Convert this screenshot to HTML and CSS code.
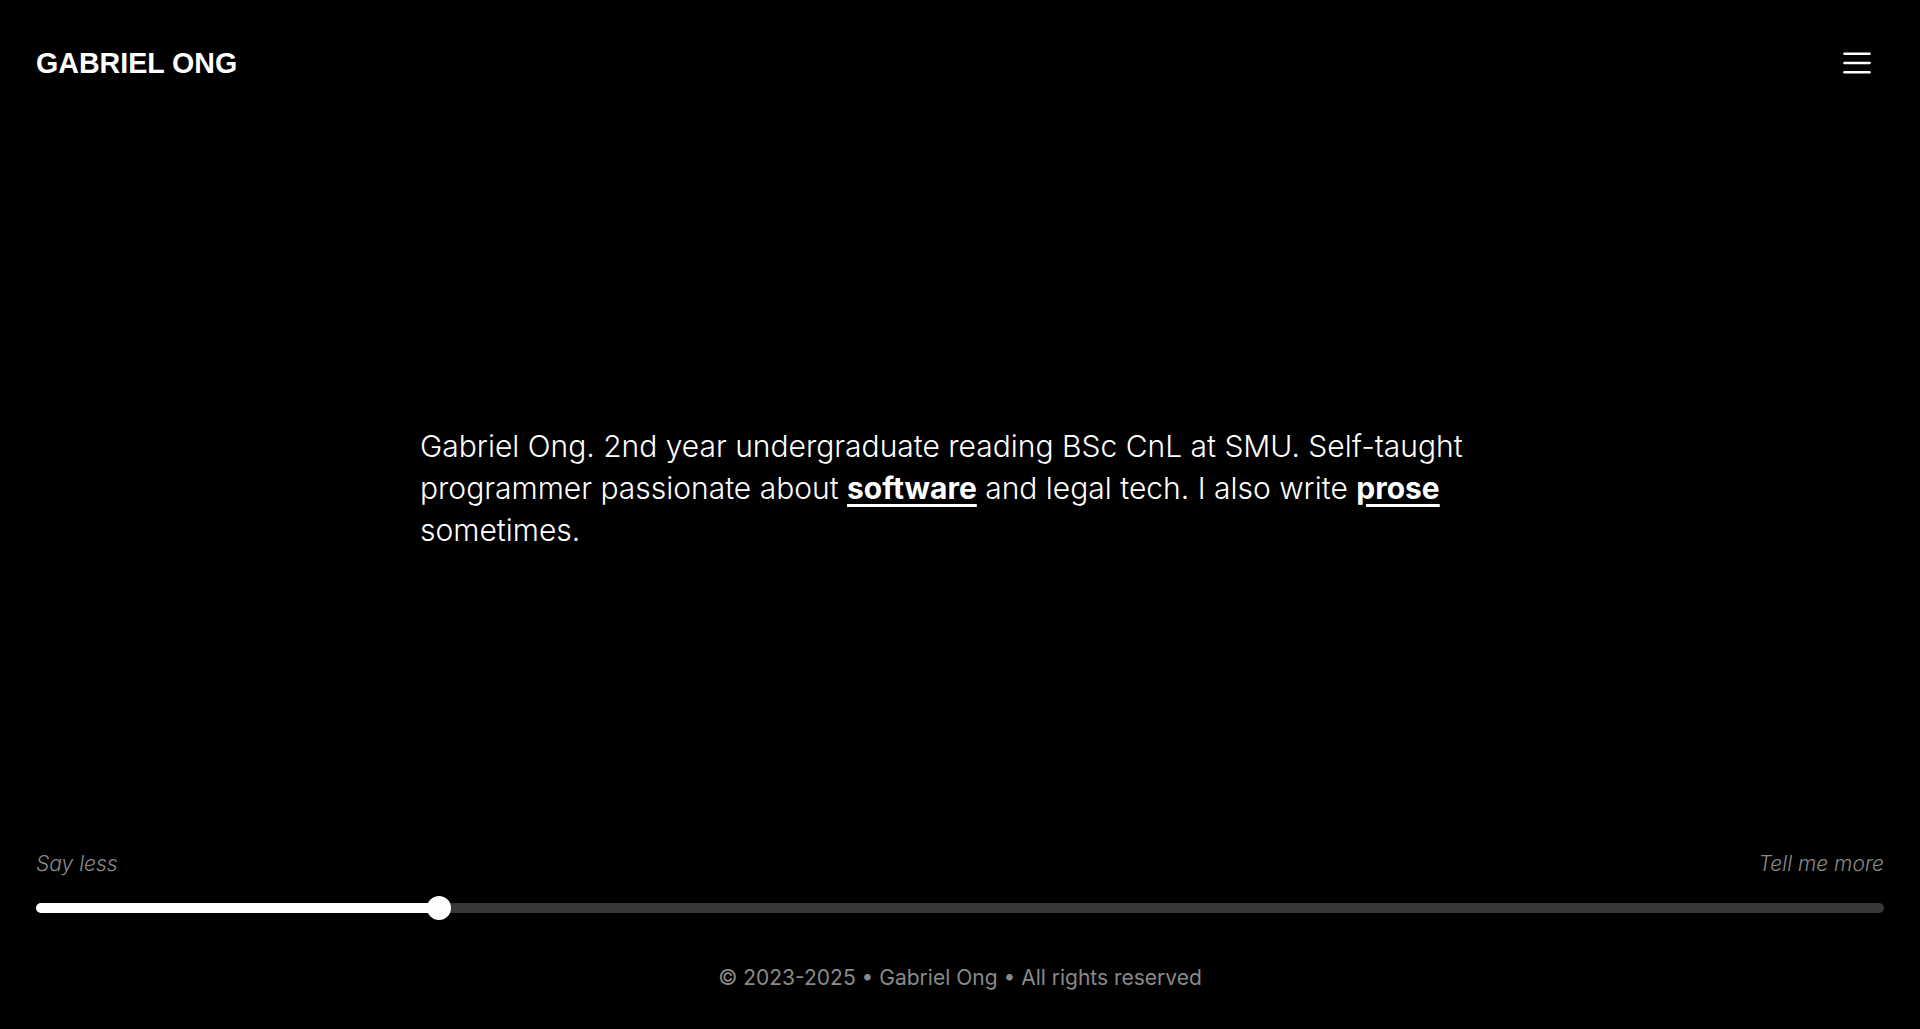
FILE: index.html
```html
<!DOCTYPE html>
<html lang="en">
<head>
<meta charset="utf-8">
<title>Gabriel Ong</title>
<link rel="stylesheet" href="styles.css">
</head>
<body>
<div class="page">
  <header class="header">
    <a class="brand" href="#">GABRIEL ONG</a>
    <button class="menu-btn" aria-label="Menu">
      <svg width="28" height="24" viewBox="0 0 28 24" fill="none" stroke="#fff" stroke-width="2.6" stroke-linecap="round">
        <line x1="1.5" y1="2.8" x2="26.5" y2="2.8"/>
        <line x1="1.5" y1="12" x2="26.5" y2="12"/>
        <line x1="1.5" y1="21.2" x2="26.5" y2="21.2"/>
      </svg>
    </button>
  </header>
  <main class="main">
    <p class="bio">Gabriel Ong. 2nd year undergraduate reading BSc CnL at SMU. Self-taught programmer passionate about <a href="#">software</a> and legal tech. I also write <a href="#">prose</a> sometimes.</p>
  </main>
  <section class="controls">
    <div class="labels">
      <span>Say less</span>
      <span>Tell me more</span>
    </div>
    <div class="track">
      <div class="fill" style="width: 21.8%"></div>
      <div class="thumb" style="left: 21.8%"></div>
    </div>
  </section>
  <footer class="footer">© 2023-2025 • Gabriel Ong • All rights reserved</footer>
</div>
</body>
</html>
```

FILE: styles.css
```css
* { box-sizing: border-box; }
html, body {
  margin: 0;
  padding: 0;
  background: #000;
  color: #fff;
}
body {
  font-family: Inter, "Noto Sans", sans-serif;
}
.page {
  min-height: 100vh;
  display: flex;
  flex-direction: column;
}
.header {
  height: 126px;
  display: flex;
  align-items: center;
  justify-content: space-between;
  padding: 0 49px 0 36px;
}
.brand {
  font-family: "Liberation Sans", Arial, sans-serif;
  font-weight: 700;
  font-size: 28.6px;
  color: #fff;
  text-decoration: none;
  line-height: 1;
}
.menu-btn {
  background: none;
  border: 0;
  padding: 0;
  margin: 0;
  display: flex;
  cursor: pointer;
}
.main {
  flex: 1;
  display: flex;
  align-items: center;
  justify-content: center;
  padding: 0 20px;
}
.bio {
  width: 1080px;
  margin: 0;
  font-size: 30px;
  font-weight: 300;
  line-height: 42px;
  color: #fff;
}
.bio a {
  color: #fff;
  font-weight: 700;
  text-decoration: underline;
  text-decoration-thickness: 3px;
  text-underline-offset: 5px;
}
.controls {
  padding: 0 36px;
  display: flex;
  flex-direction: column;
  gap: 18px;
}
.labels {
  display: flex;
  justify-content: space-between;
  font-size: 21px;
  line-height: 28px;
  font-style: italic;
  font-weight: 300;
  color: #8a8a8a;
}
.track {
  position: relative;
  height: 24px;
  display: flex;
  align-items: center;
}
.track::before {
  content: "";
  position: absolute;
  left: 0;
  right: 0;
  top: 7px;
  height: 10px;
  border-radius: 5px;
  background: #383838;
}
.fill {
  position: relative;
  height: 10px;
  border-radius: 5px;
  background: #fff;
}
.thumb {
  position: absolute;
  top: 0;
  width: 24px;
  height: 24px;
  margin-left: -12px;
  border-radius: 50%;
  background: #fff;
}
.footer {
  margin-top: 44px;
  padding-bottom: 37px;
  text-align: center;
  font-size: 21px;
  line-height: 28px;
  color: #8a8a8a;
}
```
